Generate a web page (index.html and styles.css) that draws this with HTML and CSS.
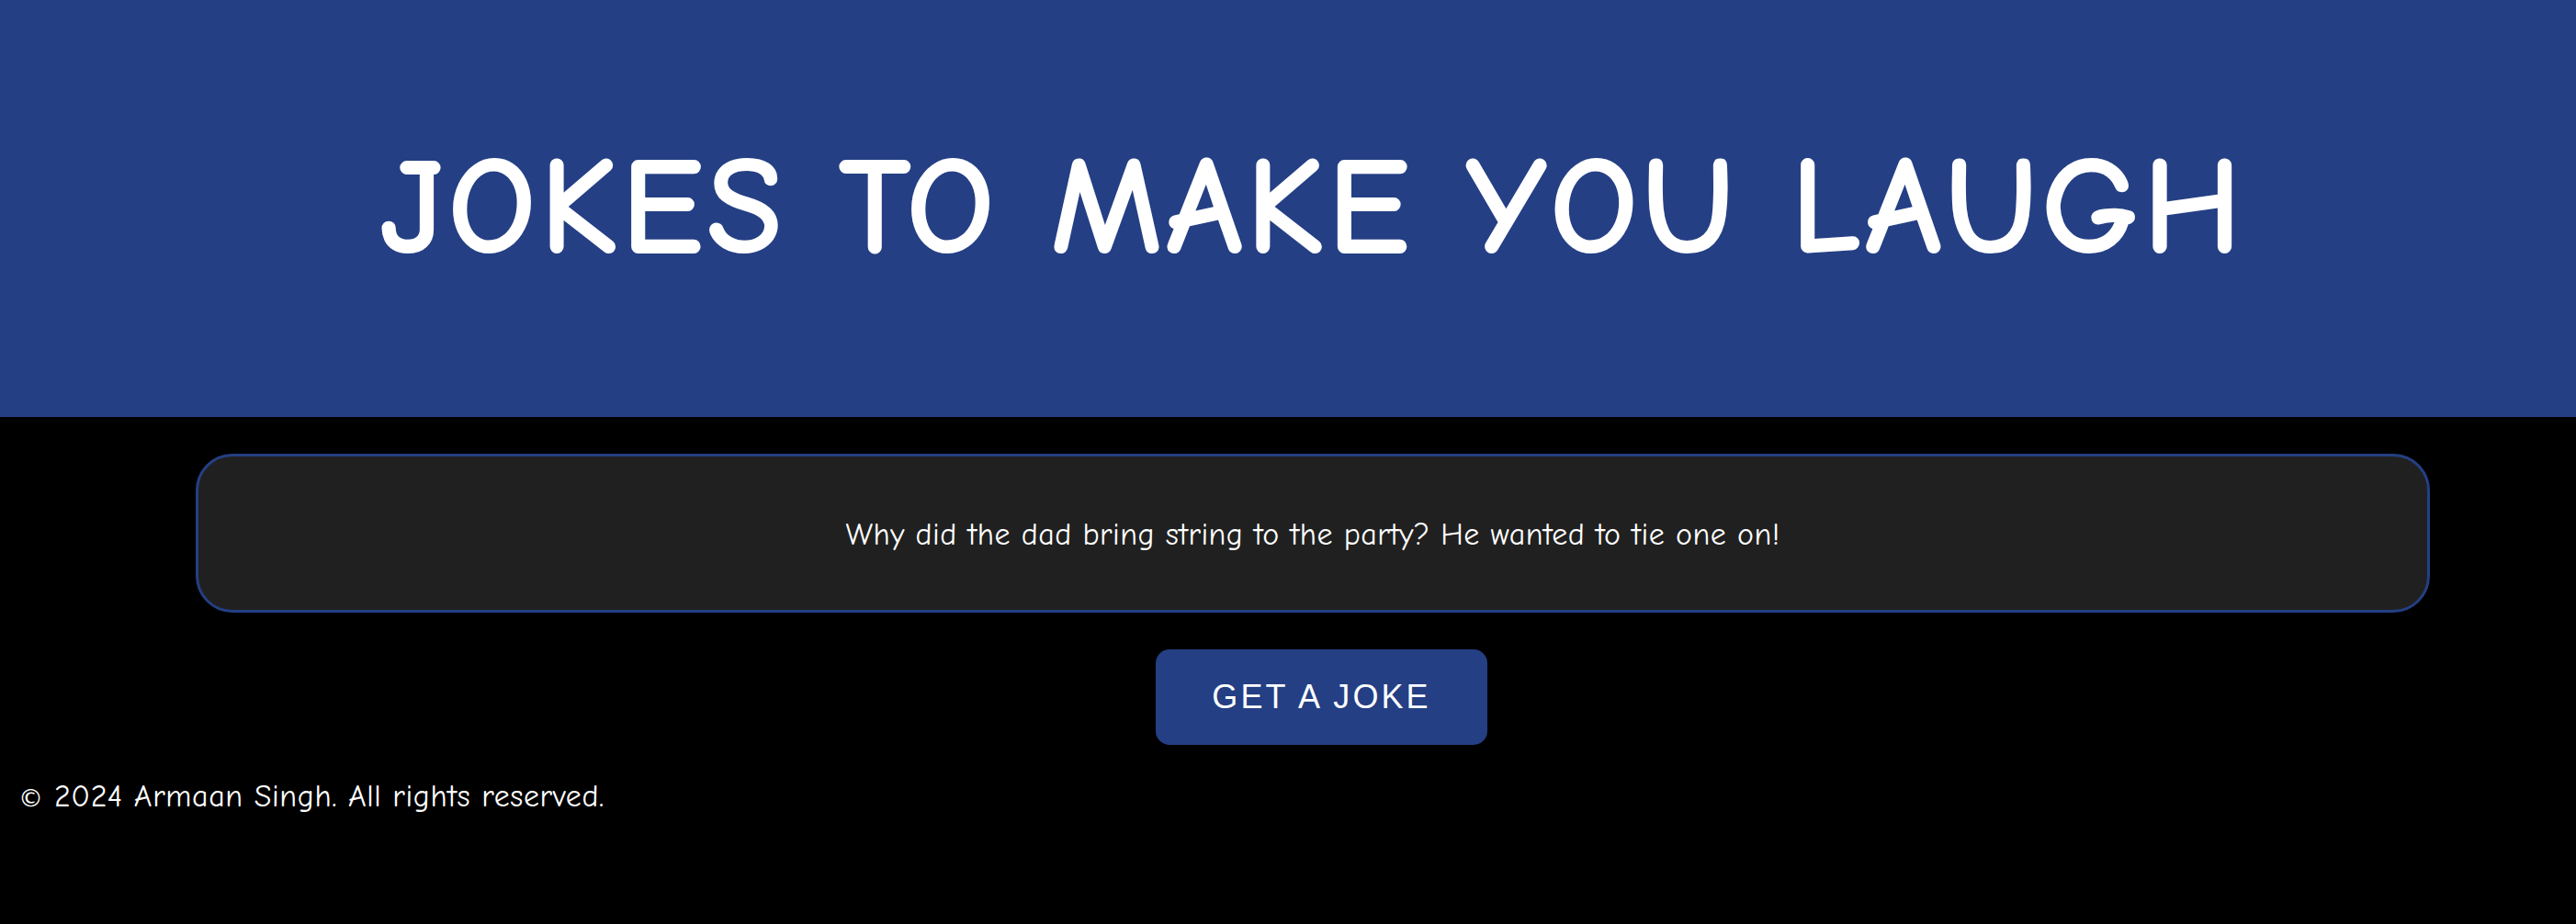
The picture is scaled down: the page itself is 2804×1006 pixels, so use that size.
FILE: index.html
```html
<!DOCTYPE html>
<html lang="en">
<head>
<meta charset="UTF-8">
<title>Jokes</title>
<link rel="stylesheet" href="styles.css">
</head>
<body>
<header class="site-header">
  <h1 class="title">JOKES TO MAKE YOU LAUGH</h1>
</header>
<main class="main">
  <div class="joke-card">
    <p class="joke-text">Why did the dad bring string to the party? He wanted to tie one on!</p>
  </div>
  <div class="actions">
    <button class="joke-btn" type="button">GET A JOKE</button>
  </div>
</main>
<footer class="site-footer">
  <p class="copyright"><span class="copy-mark">©</span> 2024 Armaan Singh. All rights reserved.</p>
</footer>
</body>
</html>
```

FILE: styles.css
```css
* { box-sizing: border-box; }
html, body { margin: 0; padding: 0; }
body {
  background: #000;
  color: #fff;
  font-family: "Comic Sans MS", "Comic Neue", "Lato", sans-serif;
  min-height: 1006px;
}
.site-header {
  height: 454px;
  background: #243f84;
  display: flex;
  align-items: center;
  justify-content: center;
  padding-left: 52px;
}
.title {
  margin: 0;
  font-size: 152px;
  font-weight: 900;
  letter-spacing: 3.1px;
  line-height: 1;
  color: #fff;
  padding-bottom: 3px;
}
.main {
  display: flex;
  flex-direction: column;
}
.joke-card {
  margin: 40px 159px 0 213px;
  height: 173px;
  border: 3px solid #243f84;
  border-radius: 40px;
  background: #202020;
  display: flex;
  align-items: center;
  justify-content: center;
}
.joke-text {
  margin: 0;
  font-size: 34px;
  letter-spacing: 0.45px;
  padding-top: 2px;
}
.actions {
  display: flex;
  justify-content: center;
  padding: 40px 159px 0 232px;
}
.joke-btn {
  width: 361px;
  height: 104px;
  border: none;
  border-radius: 15px;
  background: #243f84;
  color: #fff;
  font-family: "Liberation Sans", Arial, sans-serif;
  font-size: 36px;
  letter-spacing: 3.1px;
  cursor: pointer;
}
.site-footer {
  padding: 36px 0 0 20px;
}
.copyright {
  margin: 0;
  font-size: 34px;
  letter-spacing: 0.6px;
}
.copy-mark {
  font-family: "DejaVu Sans", sans-serif;
  font-size: 27px;
  letter-spacing: 0;
}
```
